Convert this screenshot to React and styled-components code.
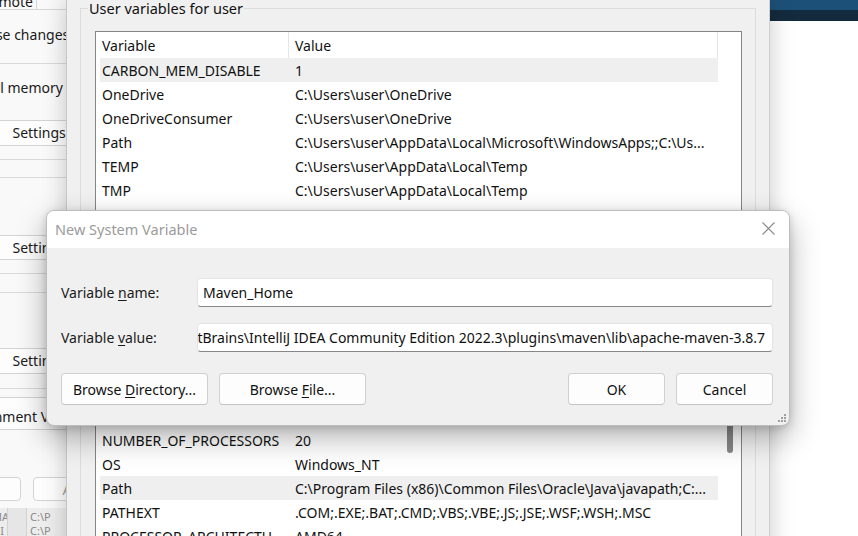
import React from "react"
import styled, { createGlobalStyle } from "styled-components"

const GlobalStyle = createGlobalStyle`
  html, body { margin: 0; padding: 0; overflow: hidden; }
  body {
    font-family: "Noto Sans", "Open Sans", sans-serif;
    font-size: 14px;
    color: #111;
  }
`

const userVars = [
  ["CARBON_MEM_DISABLE", "1", true],
  ["OneDrive", "C:\\Users\\user\\OneDrive"],
  ["OneDriveConsumer", "C:\\Users\\user\\OneDrive"],
  ["Path", "C:\\Users\\user\\AppData\\Local\\Microsoft\\WindowsApps;;C:\\Us..."],
  ["TEMP", "C:\\Users\\user\\AppData\\Local\\Temp"],
  ["TMP", "C:\\Users\\user\\AppData\\Local\\Temp"],
]

const systemVars = [
  ["ComSpec", "C:\\WINDOWS\\system32\\cmd.exe"],
  ["DriverData", "C:\\Windows\\System32\\Drivers\\DriverData"],
  ["MAVEN_HOME", "C:\\Program Files\\Maven"],
  ["NUMBER_OF_PROCESSORS", "20"],
  ["OS", "Windows_NT"],
  ["Path", "C:\\Program Files (x86)\\Common Files\\Oracle\\Java\\javapath;C:...", true],
  ["PATHEXT", ".COM;.EXE;.BAT;.CMD;.VBS;.VBE;.JS;.JSE;.WSF;.WSH;.MSC"],
  ["PROCESSOR_ARCHITECTU...", "AMD64"],
]

const VarList = ({ rows, height, thumb }) => (
  <List $h={height}>
    <ListHeader>
      <HeadCell $w={192}>Variable</HeadCell>
      <HeadCell $w={430} $sep>Value</HeadCell>
    </ListHeader>
    {rows.map(([name, value, sel]) => (
      <Row key={name} $sel={sel}>
        <NameCell>{name}</NameCell>
        <ValueCell>{value}</ValueCell>
      </Row>
    ))}
    {thumb && <Thumb />}
  </List>
)

const App = () => (
  <>
    <GlobalStyle />
    <Desktop>
      <BannerTop />
      <BannerBottom />

      <SideWindow>
        <TabStrip>
          <Tab>Remote</Tab>
        </TabStrip>
        <Band $h={53} $pt={15} $pr={7}>
          <span>You must be logged on as an Administrator to make most of these changes.</span>
        </Band>
        <Band $h={57} $pt={14} $pr={17} $top>
          <span>Visual effects, processor scheduling, memory usage, and virtual memory</span>
        </Band>
        <SideButton $h={24} $shift={3}>
          <span>Settings...</span>
        </SideButton>
        <Band $h={13} />
        <Band $h={18} $top />
        <Band $h={58} $top />
        <SideButton $h={23} $shift={3}>
          <span>Settings...</span>
        </SideButton>
        <Band $h={13} />
        <Band $h={19} $top />
        <Band $h={56} $top />
        <SideButton $h={24} $shift={3}>
          <span>Settings...</span>
        </SideButton>
        <Band $h={14} />
        <Band $h={9} $top />
        <SideButton $h={31} $pt={9} $shift={-32}>
          <span>Environment Variables...</span>
        </SideButton>
        <Band $h={47} />
        <SideActions>
          <SmallButton $w={90}>Cancel</SmallButton>
          <SmallButton $w={96} $disabled>Apply</SmallButton>
        </SideActions>
        <Band $h={7} />
        <BackList>
          <BackCol $w={14} />
          <BackCol $w={15} $light>
            <span>MA</span>
            <span>NI</span>
          </BackCol>
          <BackCol $w={15} />
          <BackCol $w={36} $light>
            <span>C:\P</span>
            <span>C:\P</span>
          </BackCol>
        </BackList>
      </SideWindow>

      <EnvWindow>
        <Group $h={280} $pt={22}>
          <Legend>User variables for user</Legend>
          <VarList rows={userVars} height={200} />
        </Group>
        <Group $h={260} $pt={28} $mt={12}>
          <Legend>System variables</Legend>
          <VarList rows={systemVars} height={240} thumb />
        </Group>
      </EnvWindow>

      <Dialog>
        <TitleBar>
          <Title>New System Variable</Title>
          <CloseButton>
            <svg width="13" height="13" viewBox="0 0 13 13">
              <path d="M0.5 0.5 L12.5 12.5 M12.5 0.5 L0.5 12.5" stroke="#8a8a8a" strokeWidth="1.1" fill="none" />
            </svg>
          </CloseButton>
        </TitleBar>
        <DialogBody>
          <Fields>
            <Label>
              Variable <u>n</u>ame:
            </Label>
            <Input>Maven_Home</Input>
            <Label>
              Variable <u>v</u>alue:
            </Label>
            <Input $end>
              <span>C:\Program Files\JetBrains\IntelliJ IDEA Community Edition 2022.3\plugins\maven\lib\apache-maven-3.8.7</span>
            </Input>
          </Fields>
          <Actions>
            <ButtonGroup>
              <Button $w={147}>
                <span>
                  Browse <u>D</u>irectory...
                </span>
              </Button>
              <Button $w={147}>
                <span>
                  Browse <u>F</u>ile...
                </span>
              </Button>
            </ButtonGroup>
            <ButtonGroup>
              <Button $w={97}>OK</Button>
              <Button $w={97}>Cancel</Button>
            </ButtonGroup>
          </Actions>
        </DialogBody>
        <Grip>
          <svg width="9" height="9" viewBox="0 0 9 9" fill="#a0a0a0">
            <rect x="6" y="0" width="2" height="2" />
            <rect x="3" y="3" width="2" height="2" />
            <rect x="6" y="3" width="2" height="2" />
            <rect x="0" y="6" width="2" height="2" />
            <rect x="3" y="6" width="2" height="2" />
            <rect x="6" y="6" width="2" height="2" />
          </svg>
        </Grip>
      </Dialog>
    </Desktop>
  </>
)

export default App

const Desktop = styled.div`
  position: relative;
  width: 858px;
  height: 536px;
  overflow: hidden;
  background: #ffffff;
`

const BannerTop = styled.div`
  height: 10px;
  background: #1d5078;
`

const BannerBottom = styled.div`
  height: 11px;
  background: #142b3e;
`

/* System Properties window, mostly hidden behind the others */
const SideWindow = styled.div`
  position: absolute;
  left: -254px;
  top: 0;
  width: 334px;
  height: 536px;
  background: #f9f9f9;
  display: flex;
  flex-direction: column;
  overflow: hidden;
  color: #1a1a1a;
`

const TabStrip = styled.div`
  height: 9px;
  border-bottom: 1px solid #d6d6d6;
  display: flex;
  justify-content: flex-end;
  padding-right: 43px;
  flex-shrink: 0;
`

const Tab = styled.div`
  border-right: 1px solid #d6d6d6;
  padding-right: 3px;
  line-height: 14px;
  margin-top: -5px;
  height: 14px;
  white-space: nowrap;
`

const Band = styled.div`
  height: ${p => p.$h}px;
  flex-shrink: 0;
  padding-top: ${p => p.$pt || 0}px;
  padding-right: ${p => p.$pr || 0}px;
  box-sizing: border-box;
  border-top: ${p => (p.$top ? "1px solid #d9d9d9" : "none")};
  display: flex;
  justify-content: flex-end;
  align-items: flex-start;
  white-space: nowrap;
  line-height: 20px;
  span {
    flex-shrink: 0;
  }
`

const SideButton = styled.div`
  height: ${p => p.$h + 2}px;
  flex-shrink: 0;
  box-sizing: border-box;
  border-top: 1px solid #d3d3d3;
  border-bottom: 1px solid #d3d3d3;
  background: #fdfdfd;
  padding-top: ${p => p.$pt || 0}px;
  display: flex;
  align-items: ${p => (p.$pt ? "flex-start" : "center")};
  justify-content: flex-end;
  white-space: nowrap;
  line-height: 20px;
  span {
    flex-shrink: 0;
    margin-right: ${p => p.$shift}px;
  }
`

const SideActions = styled.div`
  height: 24px;
  flex-shrink: 0;
  display: flex;
  justify-content: flex-end;
  gap: 12px;
  margin-right: -49px;
`

const SmallButton = styled.div`
  width: ${p => p.$w}px;
  flex-shrink: 0;
  box-sizing: border-box;
  border: 1px solid #d3d3d3;
  border-radius: 4px;
  background: #fdfdfd;
  color: ${p => (p.$disabled ? "#a0a0a0" : "#1a1a1a")};
  display: flex;
  align-items: center;
  justify-content: center;
`

const BackList = styled.div`
  flex: 1;
  display: flex;
  justify-content: flex-end;
  background: #e6e6e6;
  padding-right: 14px;
  font-size: 11px;
  color: #8a8a8a;
`

const BackCol = styled.div`
  width: ${p => p.$w}px;
  background: ${p => (p.$light ? "#ededed" : "transparent")};
  border-left: 1px solid #d2d2d2;
  display: flex;
  flex-direction: column;
  padding: 2px 0 0 3px;
  line-height: 14px;
  overflow: hidden;
`

/* Environment Variables window */
const EnvWindow = styled.div`
  position: absolute;
  left: 66px;
  top: 0;
  width: 704px;
  height: 580px;
  box-sizing: border-box;
  background: #f0f0f0;
  border-left: 1px solid #c6c6c6;
  border-right: 1px solid #d0d0d0;
  padding: 8px 13px 0 13px;
  box-shadow: 0 0 22px rgba(0, 0, 0, 0.22);
  display: flex;
  flex-direction: column;
`

const Group = styled.div`
  position: relative;
  height: ${p => p.$h}px;
  margin-top: ${p => p.$mt || 0}px;
  box-sizing: border-box;
  border: 1px solid #dcdcdc;
  padding: ${p => p.$pt}px 13px 0 14px;
  flex-shrink: 0;
`

const Legend = styled.div`
  position: absolute;
  top: -10px;
  left: 7px;
  padding: 0 1px;
  background: #f0f0f0;
  line-height: 18px;
  font-size: 14.5px;
`

const List = styled.div`
  position: relative;
  height: ${p => p.$h}px;
  border: 1px solid #858585;
  background: #ffffff;
  overflow: hidden;
`

const ListHeader = styled.div`
  display: flex;
  height: 26px;
  align-items: stretch;
`

const HeadCell = styled.div`
  width: ${p => p.$w}px;
  box-sizing: border-box;
  padding-left: 6px;
  border-left: ${p => (p.$sep ? "1px solid #e5e5e5" : "none")};
  border-right: ${p => (p.$sep ? "1px solid #e5e5e5" : "none")};
  display: flex;
  align-items: center;
  white-space: nowrap;
`

const Row = styled.div`
  display: flex;
  align-items: center;
  height: 24px;
  width: 618px;
  margin-left: 4px;
  background: ${p => (p.$sel ? "#efefef" : "transparent")};
  white-space: nowrap;
`

const NameCell = styled.div`
  width: 188px;
  box-sizing: border-box;
  padding-left: 2px;
  overflow: hidden;
`

const ValueCell = styled.div`
  flex: 1;
  padding-left: 7px;
  overflow: hidden;
`

const Thumb = styled.div`
  position: absolute;
  right: 8px;
  top: 40px;
  width: 6px;
  height: 83px;
  border-radius: 3px;
  background: #878787;
`

/* New System Variable dialog */
const Dialog = styled.div`
  position: absolute;
  left: 46px;
  top: 210px;
  width: 744px;
  height: 216px;
  box-sizing: border-box;
  border: 1px solid #bdbdbd;
  border-radius: 8px;
  overflow: hidden;
  background: #f0f0f0;
  box-shadow: 0 12px 30px rgba(0, 0, 0, 0.3), 0 2px 8px rgba(0, 0, 0, 0.14);
  display: flex;
  flex-direction: column;
`

const TitleBar = styled.div`
  height: 37px;
  flex-shrink: 0;
  background: #ffffff;
  display: flex;
  align-items: center;
  justify-content: space-between;
  padding: 0 14px 0 8px;
`

const Title = styled.div`
  color: #9b9b9b;
  font-size: 14.5px;
  margin-top: -2px;
`

const CloseButton = styled.div`
  display: flex;
  align-items: center;
  margin-top: -2px;
`

const DialogBody = styled.div`
  flex: 1;
  padding: 30px 16px 0 14px;
  display: flex;
  flex-direction: column;
`

const Fields = styled.div`
  display: grid;
  grid-template-columns: 136px 1fr;
  row-gap: 16px;
  align-items: center;
`

const Label = styled.div`
  color: #1a1a1a;
  u {
    text-decoration-thickness: 1px;
    text-underline-offset: 2px;
  }
`

const Input = styled.div`
  height: 29px;
  box-sizing: border-box;
  background: #ffffff;
  border: 1px solid #e4e4e4;
  border-bottom-color: #878787;
  border-radius: 4px;
  display: flex;
  align-items: center;
  justify-content: ${p => (p.$end ? "flex-end" : "flex-start")};
  padding: 0 7px 0 5px;
  overflow: hidden;
  white-space: nowrap;
  span {
    flex-shrink: 0;
  }
`

const Actions = styled.div`
  margin-top: 21px;
  display: flex;
  justify-content: space-between;
`

const ButtonGroup = styled.div`
  display: flex;
  gap: 11px;
`

const Button = styled.div`
  width: ${p => p.$w}px;
  height: 32px;
  box-sizing: border-box;
  background: #fdfdfd;
  border: 1px solid #d0d0d0;
  border-bottom-color: #c4c4c4;
  border-radius: 4px;
  display: flex;
  align-items: center;
  justify-content: center;
  white-space: nowrap;
  u {
    text-decoration-thickness: 1px;
    text-underline-offset: 2px;
  }
`

const Grip = styled.div`
  position: absolute;
  right: 2px;
  bottom: 2px;
  line-height: 0;
`
